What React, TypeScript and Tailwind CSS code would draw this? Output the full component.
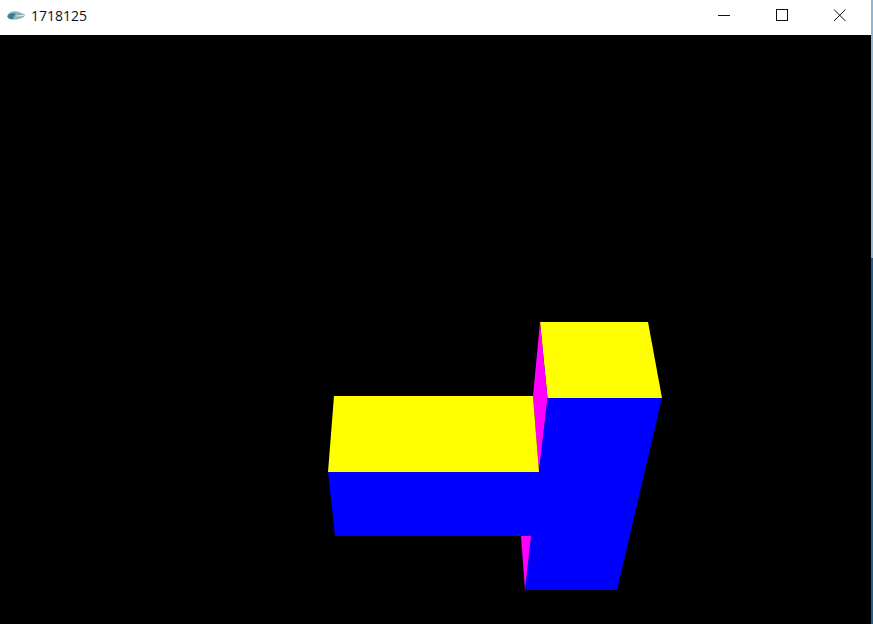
function AppIcon() {
  return (
    <svg width="20" height="12" viewBox="0 0 20 12">
      <path d="M1 6 C3 1.5 9 0.5 13 2 C15 2.8 17 4 19 4.5 L18 7 C14 9.5 6 10.5 2 8.5 Z" fill="#8fb0b6" />
      <path d="M1.5 6.5 C3 3 7 2.5 10 4 C8 5 7 7 7.5 9 C5 9.5 3 8.5 1.5 6.5 Z" fill="#2f7f8c" />
      <path d="M10 6 L18 5.5" stroke="#e4eef0" strokeWidth="1" />
    </svg>
  );
}

function WindowButtons() {
  return (
    <div className="flex h-full items-center pr-[2px]">
      <div className="flex h-full w-[58px] items-center justify-center">
        <svg width="14" height="13" viewBox="0 0 14 13">
          <path d="M1 6.5 H13" stroke="#111" strokeWidth="1" fill="none" />
        </svg>
      </div>
      <div className="flex h-full w-[58px] items-center justify-center">
        <svg width="14" height="13" viewBox="0 0 14 13">
          <rect x="1.5" y="0.5" width="11" height="11" stroke="#111" strokeWidth="1" fill="none" />
        </svg>
      </div>
      <div className="flex h-full w-[58px] items-center justify-center">
        <svg width="14" height="13" viewBox="0 0 14 13">
          <path d="M1 0.5 L12.5 12 M12.5 0.5 L1 12" stroke="#111" strokeWidth="1" fill="none" />
        </svg>
      </div>
    </div>
  );
}

export default function App() {
  return (
    <div className="flex h-[624px] w-[873px] overflow-hidden bg-black">
      <div className="flex w-[871px] flex-col">
        <div className="flex h-[35px] items-center justify-between bg-white pb-[4px]">
          <div className="flex items-center gap-[5px] pl-[6px]">
            <AppIcon />
            <span className="font-['Open_Sans',sans-serif] text-[14px] text-[#111]">1718125</span>
          </div>
          <WindowButtons />
        </div>
        <div className="flex-1 bg-black">
          <svg width="871" height="589" viewBox="0 35 871 589">
            <polygon points="540,322 648,322 662,398 547.5,398" fill="#ffff00" />
            <polygon points="540,322 547.5,398 539,472 533,396" fill="#ff00ff" />
            <polygon points="334,396 533,396 539,472 328,472" fill="#ffff00" />
            <polygon points="328,472 539,472 547.5,398 662,398 617,590 525,590 531,536 335,536" fill="#0000ff" />
            <polygon points="521,536 531,536 525,590" fill="#ff00ff" />
          </svg>
        </div>
      </div>
      <div className="flex w-[2px] flex-col">
        <div className="h-[258px] bg-[#8fb4d6]" />
        <div className="flex-1 bg-[#1f5f96]" />
      </div>
    </div>
  );
}
